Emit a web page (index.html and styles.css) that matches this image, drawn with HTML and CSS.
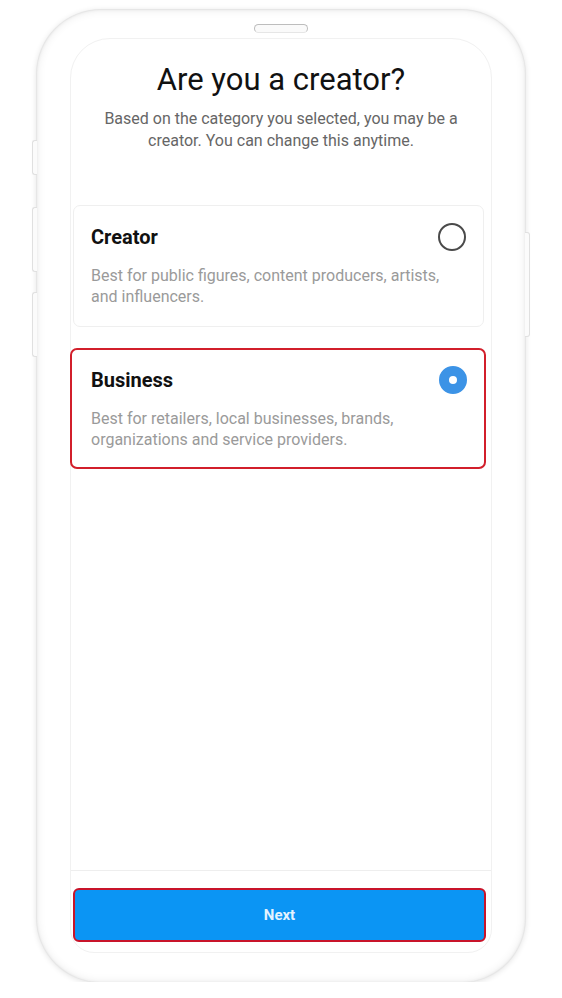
FILE: index.html
```html
<!DOCTYPE html>
<html lang="en">
<head>
<meta charset="utf-8">
<title>Are you a creator?</title>
<link rel="stylesheet" href="styles.css">
</head>
<body>
<div class="phone">
  <span class="side side-l1"></span>
  <span class="side side-l2"></span>
  <span class="side side-l3"></span>
  <span class="side side-r1"></span>
  <div class="speaker"></div>
  <div class="screen">
    <header class="intro">
      <h1 class="title">Are you a creator?</h1>
      <p class="subtitle">Based on the category you selected, you may be a creator. You can change this anytime.</p>
    </header>
    <div class="options">
      <div class="card">
        <div class="card-head">
          <span class="card-title">Creator</span>
          <span class="radio"></span>
        </div>
        <p class="card-desc">Best for public figures, content producers, artists, and influencers.</p>
      </div>
      <div class="card card-selected">
        <div class="card-head">
          <span class="card-title">Business</span>
          <span class="radio radio-on"></span>
        </div>
        <p class="card-desc">Best for retailers, local businesses, brands, organizations and service providers.</p>
      </div>
    </div>
    <div class="spacer"></div>
    <footer class="footer">
      <button class="next">Next</button>
    </footer>
  </div>
</div>
</body>
</html>
```

FILE: styles.css
```css
* { box-sizing: border-box; }
html, body { margin: 0; padding: 0; background: #fff; }
body { font-family: Roboto, "Noto Sans", Arial, sans-serif; }

.phone {
  position: relative;
  margin: 10px 0 0 37px;
  width: 488px;
  height: 972px;
  border-radius: 64px;
  background: #fff;
  padding: 14px 33px 0 33px;
  box-shadow: 0 0 0 1px #e6e6e6, 0 1px 6px rgba(0,0,0,0.14), inset 0 0 10px rgba(0,0,0,0.08), inset 0 0 3px rgba(0,0,0,0.06);
}

.side {
  position: absolute;
  width: 5px;
  background: #fbfbfb;
  border: 1px solid #e0e0e0;
}
.side-l1 { left: -5px; top: 130px; height: 35px; border-radius: 3px 0 0 3px; border-right: none; }
.side-l2 { left: -5px; top: 197px; height: 65px; border-radius: 3px 0 0 3px; border-right: none; }
.side-l3 { left: -5px; top: 282px; height: 65px; border-radius: 3px 0 0 3px; border-right: none; }
.side-r1 { right: -5px; top: 222px; height: 105px; border-radius: 0 3px 3px 0; border-left: none; }

.speaker {
  width: 54px;
  height: 9px;
  margin: 0 auto;
  border: 1.5px solid #bdbdbd;
  border-bottom-color: #e6e6e6;
  border-radius: 6px;
  background: #fafafa;
}

.screen {
  margin-top: 5px;
  height: 915px;
  border: 1px solid #f1f1f1;
  border-radius: 40px 40px 24px 24px;
  background: #fff;
  display: flex;
  flex-direction: column;
}

.intro {
  text-align: center;
  padding: 21px 20px 0;
}
.title {
  margin: 0;
  font-size: 31px;
  font-weight: 400;
  line-height: 40px;
  color: #111;
}
.subtitle {
  margin: 8px auto 0;
  width: 380px;
  font-size: 16px;
  line-height: 22px;
  color: #666;
}

.options {
  margin-top: 53px;
  padding: 0 7px 0 2px;
  display: flex;
  flex-direction: column;
  gap: 21px;
}
.card {
  border: 1px solid #efefef;
  border-radius: 7px;
  padding: 17px 17px 19px 17px;
  height: 122px;
}
.card-selected {
  border: 2px solid #d21f2b;
  margin: 0 -2px 0 -3px;
  padding: 16px 17px 18px 19px;
  height: 121px;
}
.card-head {
  display: flex;
  align-items: center;
  justify-content: space-between;
  height: 28px;
}
.card-title {
  font-size: 20px;
  font-weight: 700;
  color: #111;
}
.radio {
  width: 28px;
  height: 28px;
  border-radius: 50%;
  border: 2px solid #4a4a4a;
}
.radio-on {
  border: 10px solid #3c93e6;
  background: #fff;
}
.card-desc {
  margin: 14px 0 0;
  font-size: 16px;
  line-height: 21px;
  color: #9a9a9a;
}

.spacer { flex: 1; }

.footer {
  border-top: 1px solid #eeeeee;
  padding: 17px 5px 10px 2px;
}
.next {
  display: block;
  width: 100%;
  height: 54px;
  border: 2px solid #c8142a;
  border-radius: 6px;
  background: #0b95f4;
  color: #e4f3ff;
  font-family: Roboto, "Noto Sans", Arial, sans-serif;
  font-size: 15px;
  font-weight: 700;
}
```
